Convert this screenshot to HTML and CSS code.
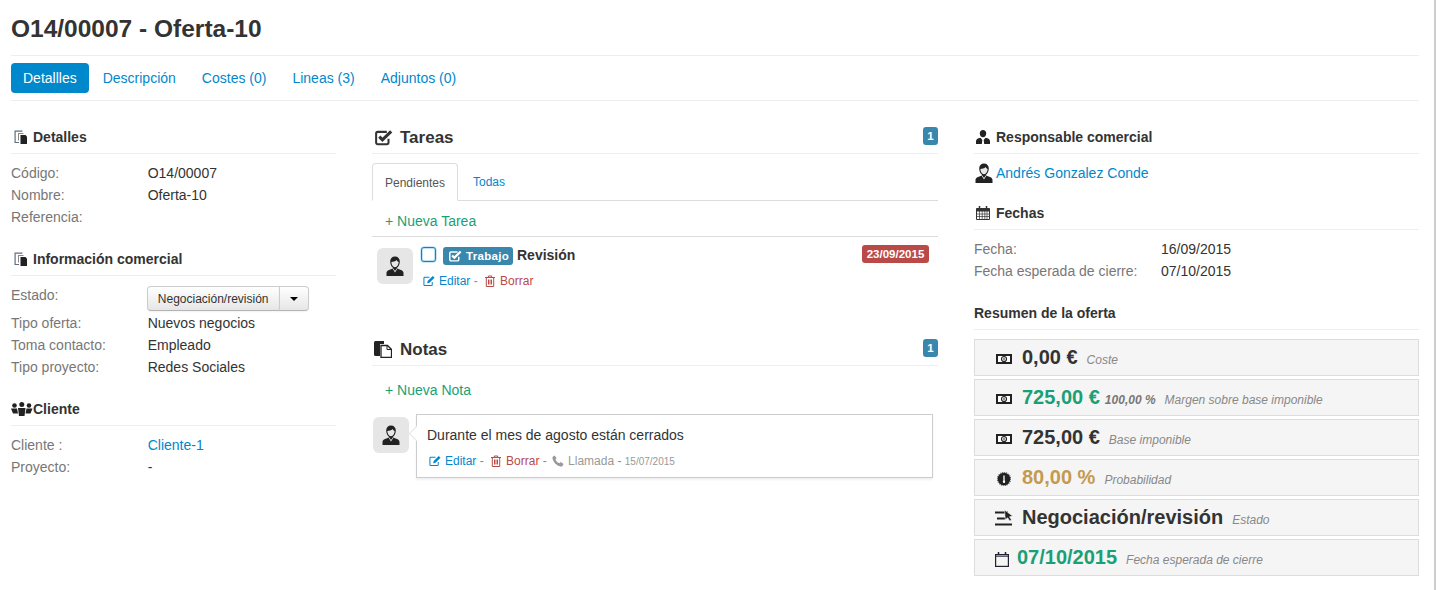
FILE: index.html
```html
<!DOCTYPE html>
<html lang="es">
<head>
<meta charset="utf-8">
<title>O14/00007 - Oferta-10</title>
<link rel="stylesheet" href="styles.css">
</head>
<body>
<svg class="defs" width="0" height="0" aria-hidden="true">
  <symbol id="i-docs" viewBox="0 0 14 14"><path d="M.5 .5h8v1.200H1.700v10.300H5V13H.5z" fill="#5f6f80"/><path d="M4 3h5.500v1H5v6.500H4z" fill="#888"/><path d="M6.500 5h5l1.500 1.500V14H6.500z" fill="#222"/></symbol>
  <symbol id="i-user" viewBox="0 0 18 20"><path d="M9 .5c3 0 4.800 2 4.800 5 0 2.500-1 4.800-2.600 6l-.2 1 4 1.500c1.500.6 2.500 1.700 2.500 3V20H.5v-3c0-1.300 1-2.400 2.500-3l4-1.500-.2-1C5.200 10.300 4.200 8 4.200 5.500c0-3 1.800-5 4.800-5z" fill="#222"/><path d="M5.400 6c1.600 0 4-.4 5.100-1.900.6 1 1.400 1.700 2.100 1.900 0 2.500-1.500 5.200-3.600 5.200S5.400 8.500 5.400 6z" fill="#e8e8e8"/><path d="M7.300 12.600L9 15l1.700-2.400.5.300L9 16.500 6.800 12.900z" fill="#e8e8e8"/></symbol>
  <symbol id="i-suit" viewBox="0 0 14 14"><path d="M7 0c2 0 3.200 1.400 3.200 3.400C10.200 5.500 8.800 7.200 7 7.200S3.800 5.500 3.800 3.400C3.800 1.400 5 0 7 0z" fill="#222"/><path d="M0 14v-2.800C0 9.500 1.500 8.300 4.500 7.800L6.300 10 5.800 14zM14 14v-2.800c0-1.700-1.500-2.900-4.500-3.400L7.700 10l.5 4z" fill="#222"/></symbol>
  <symbol id="i-cash" viewBox="0 0 16 10"><rect x="1" y="1" width="14" height="8" fill="#fff" stroke="#222" stroke-width="2"/><circle cx="8" cy="5" r="2.500" fill="none" stroke="#222" stroke-width="1.200"/><path d="M8 3.600v2.800" stroke="#222"/></symbol>
  <symbol id="i-edit" viewBox="0 0 13 12"><path d="M10 7v3a1 1 0 0 1-1 1H2a1 1 0 0 1-1-1V3a1 1 0 0 1 1-1h5" fill="none" stroke="currentColor" stroke-width="1.100"/><path d="M4.500 8.500l.6-2.500L10.500.7l2 1.900-5.500 5.300z" fill="currentColor"/></symbol>
  <symbol id="i-trash" viewBox="0 0 11 12"><path d="M.5 2.500h10M3.800 2.500V1h3.400v1.500M1.800 2.500v9h7.400v-9M4 4.500v5M5.500 4.500v5M7 4.500v5" fill="none" stroke="currentColor"/></symbol>
  <symbol id="i-check" viewBox="0 0 16 14"><path d="M12 8v3.500a1.500 1.500 0 0 1-1.500 1.500h-8A1.500 1.500 0 0 1 1 11.500v-8A1.500 1.500 0 0 1 2.500 2h8" fill="none" stroke="currentColor" stroke-width="1.800"/><path d="M3.800 6.300l2.800 2.800L14.400 1.500" fill="none" stroke="currentColor" stroke-width="2.800"/></symbol>
</svg>

<div class="page">
  <h1 class="title">O14/00007 - Oferta-10</h1>

  <nav class="pills">
    <a class="pill active">Detallles</a>
    <a class="pill">Descripción</a>
    <a class="pill">Costes (0)</a>
    <a class="pill">Lineas (3)</a>
    <a class="pill">Adjuntos (0)</a>
  </nav>

  <div class="columns">
    <section class="col">
      <h3 class="head"><svg class="ic14"><use href="#i-docs"/></svg>Detalles</h3>
      <dl class="rows">
        <div class="row"><dt>Código:</dt><dd>O14/00007</dd></div>
        <div class="row"><dt>Nombre:</dt><dd>Oferta-10</dd></div>
        <div class="row"><dt>Referencia:</dt><dd></dd></div>
      </dl>

      <h3 class="head"><svg class="ic14"><use href="#i-docs"/></svg>Información comercial</h3>
      <dl class="rows">
        <div class="row row-btn">
          <dt>Estado:</dt>
          <dd class="btn-group"><span class="btn">Negociación/revisión</span><span class="btn caret-btn"><i class="caret"></i></span></dd>
        </div>
        <div class="row"><dt>Tipo oferta:</dt><dd>Nuevos negocios</dd></div>
        <div class="row"><dt>Toma contacto:</dt><dd>Empleado</dd></div>
        <div class="row"><dt>Tipo proyecto:</dt><dd>Redes Sociales</dd></div>
      </dl>

      <h3 class="head">
        <svg class="ic-group" viewBox="0 0 22 14"><circle cx="3.500" cy="3.500" r="2.300" fill="#222"/><circle cx="18" cy="3.500" r="2.300" fill="#222"/><circle cx="10.800" cy="2.500" r="2.500" fill="#222"/><path d="M0 6.500h6l1 5H2zM15.500 6.500h6l-2 5h-5zM7 6h7.500l-1 8H8z" fill="#222"/></svg>Cliente</h3>
      <dl class="rows">
        <div class="row"><dt>Cliente :</dt><dd><a class="link">Cliente-1</a></dd></div>
        <div class="row"><dt>Proyecto:</dt><dd>-</dd></div>
      </dl>
    </section>

    <section class="col">
      <h3 class="head head-lg">
        <svg class="ic-lg ic-check"><use href="#i-check"/></svg>Tareas<span class="count">1</span></h3>
      <div class="tabs">
        <a class="tab active">Pendientes</a>
        <a class="tab">Todas</a>
      </div>
      <a class="add add-task">+ Nueva Tarea</a>
      <div class="task">
        <div class="avatar"><svg class="ic-avatar"><use href="#i-user"/></svg></div>
        <div class="task-body">
          <div class="task-line">
            <span class="checkbox"></span>
            <span class="label"><svg class="ic-label"><use href="#i-check"/></svg>Trabajo</span>
            <strong class="task-name">Revisión</strong>
            <span class="date-badge">23/09/2015</span>
          </div>
          <div class="meta task-meta">
            <a class="link"><svg class="ic-act"><use href="#i-edit"/></svg>Editar</a> <span class="sep">-</span>
            <a class="del"><svg class="ic-act"><use href="#i-trash"/></svg>Borrar</a>
          </div>
        </div>
      </div>

      <h3 class="head head-lg">
        <svg class="ic-lg" viewBox="0 0 18 17"><path d="M0 1.500A1.500 1.500 0 0 1 1.500 0H10v3H6v12H1.500A1.500 1.500 0 0 1 0 13.500z" fill="#222"/><path d="M7 4.500h6.500L17.500 8.500V16.500H7z" fill="#fff" stroke="#222" stroke-width="1.300"/><path d="M13 4.500v4h4.500" fill="none" stroke="#222"/></svg>Notas<span class="count">1</span></h3>
      <a class="add add-note">+ Nueva Nota</a>
      <div class="note">
        <div class="avatar"><svg class="ic-avatar"><use href="#i-user"/></svg></div>
        <div class="note-card">
          <p class="note-text">Durante el mes de agosto están cerrados</p>
          <div class="meta note-meta">
            <a class="link"><svg class="ic-act"><use href="#i-edit"/></svg>Editar</a> <span class="sep">-</span>
            <a class="del"><svg class="ic-act"><use href="#i-trash"/></svg>Borrar</a> <span class="sep">-</span>
            <span class="call"><svg class="ic-act ic-phone" viewBox="0 0 12 12"><path d="M2.500.5L4.500 3 3.500 4.500c.6 1.600 2 3 3.800 3.800L8.800 7l2.700 2-1 2c-.5.5-1.200.7-2 .5C4.500 10.500 1.500 7.500.5 3.500c-.2-.8 0-1.500.5-2z" fill="#999"/></svg>Llamada</span> <span class="sep">-</span>
            <small class="stamp">15/07/2015</small>
          </div>
        </div>
      </div>
    </section>

    <section class="col">
      <h3 class="head"><svg class="ic-side"><use href="#i-suit"/></svg>Responsable comercial</h3>
      <div class="owner"><svg class="ic-owner"><use href="#i-user"/></svg><a class="link">Andrés Gonzalez Conde</a></div>

      <h3 class="head"><svg class="ic-side" viewBox="0 0 14 14"><path d="M.5 2.500h13v11H.5z" fill="none" stroke="#333"/><path d="M.5 2.500h13v3H.5z" fill="#333"/><path d="M3.500 0v3.500M10.500 0v3.500" stroke="#333" stroke-width="1.500"/><path d="M.5 8h13M.5 10.500h13M3.500 5v8M6.200 5v8M8.800 5v8M11 5v8" stroke="#333" stroke-width=".7"/></svg>Fechas</h3>
      <dl class="rows rows-dates">
        <div class="row"><dt>Fecha:</dt><dd>16/09/2015</dd></div>
        <div class="row"><dt>Fecha esperada de cierre:</dt><dd>07/10/2015</dd></div>
      </dl>

      <h3 class="head head-plain">Resumen de la oferta</h3>
      <ul class="stats">
        <li class="stat"><svg class="ic-cash"><use href="#i-cash"/></svg><b class="num">0,00 €</b><em class="cap">Coste</em></li>
        <li class="stat"><svg class="ic-cash"><use href="#i-cash"/></svg><b class="num green">725,00 €</b><b class="pct">100,00 %</b><em class="cap">Margen sobre base imponible</em></li>
        <li class="stat"><svg class="ic-cash"><use href="#i-cash"/></svg><b class="num">725,00 €</b><em class="cap">Base imponible</em></li>
        <li class="stat"><svg class="ic-gauge" viewBox="0 0 14 14"><circle cx="7" cy="7" r="6.300" fill="#222"/><circle cx="7" cy="7" r="6.700" fill="none" stroke="#222" stroke-width=".8" stroke-dasharray="1.200 .9"/><path d="M7 3.500v5.500" stroke="#fff" stroke-width="1.300"/><circle cx="7" cy="9.800" r="1.200" fill="#fff"/></svg><b class="num gold">80,00 %</b><em class="cap">Probabilidad</em></li>
        <li class="stat"><svg class="ic-steps" viewBox="0 0 18 16"><path d="M0 2.500h13M2 8.500h8M0 14.500h17" stroke="#222" stroke-width="2"/><path d="M9.500 0l8 6-3 .8 2 3.200-1.800 1-2-3.200-2.400 2z" fill="#222" stroke="#f5f5f5" stroke-width=".6"/></svg><b class="num">Negociación/revisión</b><em class="cap">Estado</em></li>
        <li class="stat"><svg class="ic-day" viewBox="0 0 14 15"><rect x=".6" y="2.600" width="12.800" height="11.800" fill="none" stroke="#223" stroke-width="1.200"/><path d="M.6 4.200h12.800" stroke="#223"/><path d="M3.500 0v3M10.500 0v3" stroke="#223" stroke-width="1.500"/></svg><b class="num green">07/10/2015</b><em class="cap">Fecha esperada de cierre</em></li>
      </ul>
    </section>
  </div>
</div>
</body>
</html>
```

FILE: styles.css
```css
* { box-sizing: border-box; }
html, body { margin: 0; padding: 0; }
body {
  width: 1436px;
  height: 590px;
  overflow: hidden;
  background: #fff;
  color: #333;
  font: 14px/20px "Liberation Sans", Arial, sans-serif;
  border-right: 2px solid #ccc;
}
.defs { position: absolute; }
svg { display: inline-block; flex: none; }
a { cursor: pointer; text-decoration: none; }
.link { color: #0088cc; }
.del { color: #b94a48; }

.page { width: 1408px; margin-left: 11px; }

.title {
  margin: 0;
  height: 56px;
  padding-top: 14px;
  font-size: 24.5px;
  line-height: 30px;
  font-weight: 700;
  color: #333;
  border-bottom: 1px solid #eee;
}

.pills {
  display: flex;
  height: 45px;
  padding-top: 7px;
  gap: 2px;
  border-bottom: 1px solid #eee;
}
.pill {
  height: 30px;
  padding: 5px 12px;
  border-radius: 4px;
  color: #0088cc;
}
.pill.active { background: #0088cc; color: #fff; }

.columns {
  display: grid;
  grid-template-columns: 325px 566px 445px;
  column-gap: 36px;
  padding-top: 24px;
}

.head {
  display: flex;
  align-items: center;
  height: 29px;
  margin: 0;
  padding-bottom: 5px;
  font-size: 14px;
  line-height: 20px;
  font-weight: 700;
  color: #333;
  border-bottom: 1px solid #eee;
}
.ic14 { width: 14px; height: 14px; margin: 1px 5px 0 3px; }
.ic-group { width: 22px; height: 14px; }

.rows { margin: 8px 0 19px; }
.row { display: flex; height: 22px; line-height: 22px; }
.row dt { width: 136.7px; color: #777; font-weight: 400; }
.row dd { margin: 0; color: #333; }
.row-btn { height: 28px; }

.row .btn-group { display: flex; height: 25px; margin: 2px 0 0 -1px; line-height: 24px; }
.btn {
  display: block;
  height: 25px;
  width: 133px;
  text-align: center;
  font-size: 12px;
  line-height: 24px;
  color: #333;
  background: linear-gradient(#ffffff, #e6e6e6);
  border: 1px solid #ccc;
  border-bottom-color: #b3b3b3;
  border-radius: 4px 0 0 4px;
  box-shadow: 0 1px 2px rgba(0,0,0,.05);
}
.caret-btn {
  position: relative;
  width: 30px;
  margin-left: -1px;
  border-radius: 0 4px 4px 0;
}
.caret {
  position: absolute;
  left: 10px;
  top: 10px;
  width: 0;
  height: 0;
  border-top: 4px solid #000;
  border-left: 4px solid transparent;
  border-right: 4px solid transparent;
}

.head-lg { position: relative; font-size: 17px; padding-bottom: 3px; }
.ic-lg { width: 18px; height: 17px; margin: 0 8px 0 2px; }
.ic-check { color: #333; margin-left: 3px; margin-right: 7px; }
.count {
  position: absolute;
  right: 0;
  top: 2px;
  width: 15px;
  height: 18px;
  text-align: center;
  font-size: 11.5px;
  line-height: 18px;
  font-weight: 700;
  color: #fff;
  background: #3a87ad;
  border-radius: 3px;
}

.tabs {
  display: flex;
  height: 47px;
  padding-top: 9px;
  border-bottom: 1px solid #ddd;
}
.tab {
  height: 38px;
  padding: 9px 13px;
  font-size: 12px;
  color: #0088cc;
  line-height: 20px;
}
.tab.active {
  width: 86px;
  padding: 9px 12px;
  color: #555;
  background: #fff;
  border: 1px solid #ddd;
  border-bottom-color: #fff;
  border-radius: 4px 4px 0 0;
}
.tab + .tab { padding-left: 15px; }

.add {
  display: block;
  padding-left: 13px;
  color: #1a9f76;
  font-size: 14px;
  line-height: 20px;
}
.add-task { height: 36px; padding-top: 10px; border-bottom: 1px solid #ddd; }
.add-note { height: 48px; padding-top: 14px; }

.task { display: flex; height: 100px; padding: 10px 0 0 5px; }
.avatar {
  display: flex;
  align-items: center;
  justify-content: center;
  width: 36px;
  height: 36px;
  background: #e6e6e6;
  border-radius: 6px;
  flex: none;
}
.task .avatar { margin-top: 1px; }
.ic-avatar { width: 18px; height: 20px; }
.task-body { flex: 1; margin-left: 8px; }
.task-line { display: flex; align-items: center; height: 18px; position: relative; }
.checkbox {
  width: 15px;
  height: 15px;
  margin: -3px 7px 0 0;
  border: 1px solid #0088cc;
  border-radius: 3px;
  background: #fff;
  box-shadow: 0 0 0 .5px rgba(0,136,204,.4), inset 0 0 0 1px rgba(0,136,204,.25);
}
.label {
  display: flex;
  align-items: center;
  width: 70px;
  height: 18px;
  padding-left: 6px;
  font-size: 11.5px;
  font-weight: 700;
  color: #fff;
  background: #3a87ad;
  border-radius: 3px;
  letter-spacing: .3px;
}
.ic-label { width: 13px; height: 12px; margin-right: 4px; color: #fff; }
.task-name { margin: -2px 0 0 4px; font-size: 14px; }
.date-badge {
  position: absolute;
  right: 9px;
  top: -2px;
  width: 67px;
  height: 18px;
  text-align: center;
  font-size: 11.5px;
  font-weight: 700;
  line-height: 18px;
  color: #fff;
  background: #b94a48;
  border-radius: 3px;
}
.meta { font-size: 12px; line-height: 16px; color: #777; white-space: nowrap; }
.task-meta { margin-top: 8px; }
.ic-act { width: 12px; height: 12px; vertical-align: -2px; margin: 0 4px 0 2px; }
.del .ic-act { margin-left: 3px; }
.ic-phone { margin-left: 2px; margin-right: 4px; }
.sep { color: #888; }

.note { display: flex; padding-left: 1px; position: relative; }
.note .avatar { margin-top: 3px; }
.note-card {
  position: relative;
  width: 517px;
  height: 64px;
  margin-left: 7px;
  padding: 10px 10px 0;
  background: #fff;
  border: 1px solid #ccc;
  box-shadow: 0 2px 2px rgba(0,0,0,.06);
}
.note-card::before {
  content: "";
  position: absolute;
  left: -6px;
  top: 13px;
  width: 10px;
  height: 10px;
  background: #fff;
  border-left: 1px solid #e6e6e6;
  border-bottom: 1px solid #e6e6e6;
  transform: rotate(45deg);
}
.note-text { margin: 0; position: relative; }
.note-meta { margin-top: 8px; }
.call { color: #999; }
.stamp { font-size: 10px; color: #999; }

.ic-side { width: 14px; height: 14px; margin: 0 6px 0 2px; }
.owner { display: flex; align-items: center; height: 20px; margin: 9px 0 18px; gap: 3px; }
.ic-owner { width: 18px; height: 20px; margin-left: 1px; }
.rows-dates { margin-bottom: 18px; }
.rows-dates .row dt { width: 187px; }

.head-plain { height: 30px; padding-bottom: 3px; }

.stats { list-style: none; margin: 9px 0 0; padding: 0; display: flex; flex-direction: column; gap: 3px; }
.stat {
  display: flex;
  align-items: center;
  height: 37px;
  padding-left: 21px;
  background: #f5f5f5;
  border: 1px solid #ddd;
  white-space: nowrap;
}
.ic-cash { width: 16px; height: 10px; margin: 3px 10px 0 0; }
.ic-gauge { width: 14px; height: 14px; margin: 3px 11px 0 1px; }
.ic-steps { width: 18px; height: 16px; margin: 1px 9px 0 -1px; }
.ic-day { width: 14px; height: 15px; margin: 3px 8px 0 -1px; }
.num { font-size: 20px; line-height: 24px; font-weight: 700; color: #333; margin-top: -2px; }
.green { color: #1a9f76; }
.gold { color: #c49a50; }
.pct { font-size: 12px; font-style: italic; color: #777; margin: 5px 0 0 5px; }
.cap { font-size: 12px; font-style: italic; color: #888; margin: 5px 0 0 9px; }
```
